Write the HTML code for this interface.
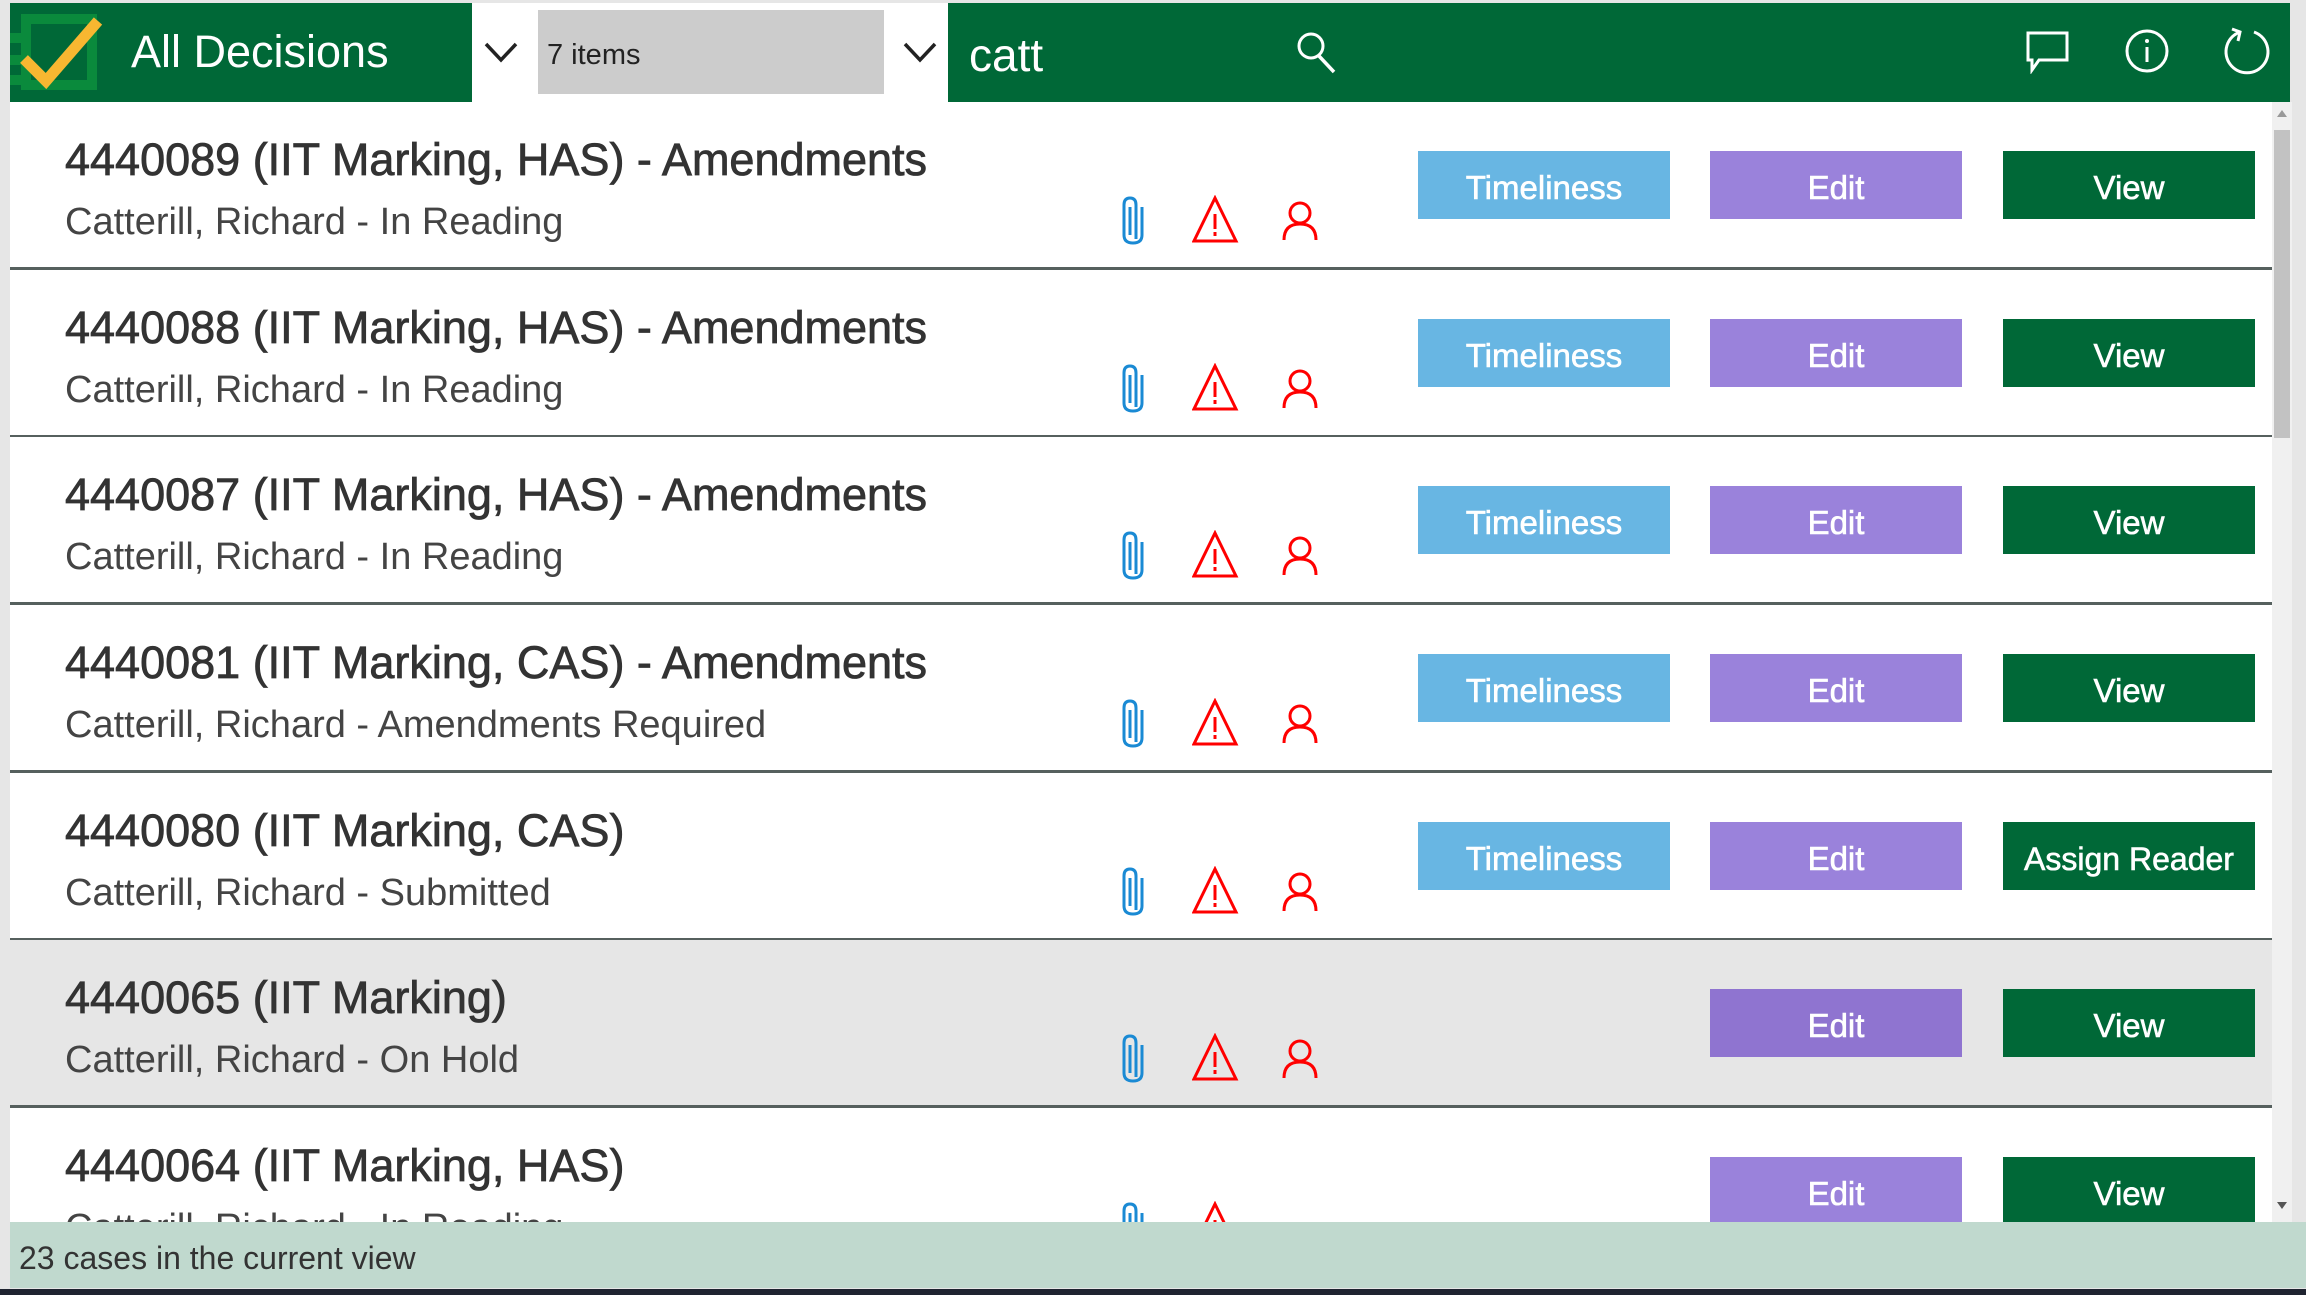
<!DOCTYPE html>
<html><head><meta charset="utf-8"><style>
*{margin:0;padding:0;box-sizing:border-box}
body{width:2306px;height:1295px;overflow:hidden;background:#e6e6e6;font-family:"Liberation Sans",sans-serif;position:relative}
.abs{position:absolute}
.row{position:absolute;left:10px;width:2262px;height:168px;background:#fff;border-bottom:3px solid #56605e;overflow:hidden}
.row.sel{background:#e6e6e6}
.t{position:absolute;left:55px;top:32px;font-size:45px;color:#333;white-space:nowrap;transform:scaleX(1.0);transform-origin:left;-webkit-text-stroke:.8px #333}
.s{position:absolute;left:55px;top:99px;font-size:38px;color:#444;white-space:nowrap;transform:scaleX(1.0);transform-origin:left}
.b{position:absolute;top:49px;width:252px;height:68px;color:#fff;font-size:33px;text-align:center;line-height:74px;-webkit-text-stroke:.6px #fff}
.tm{left:1408px;background:#68b6e3}
.ed{left:1700px;background:#9a82db}
.vw{left:1993px;background:#006837}
.ic{position:absolute;top:93px}
</style></head><body>
<svg width="0" height="0" style="position:absolute"><defs>
<g id="clip"><path d="M14 44 L14 10 Q14 3 8 3 Q2 3 2 10 L2 40 Q2 48 11 48 Q20 48 20 40 L20 12" fill="none" stroke="#1a8ad4" stroke-width="3"/><path d="M8 12 L8 40" stroke="#1a8ad4" stroke-width="3"/></g>
<g id="warn"><path d="M23 3 L44 46 L2 46 Z" fill="none" stroke="#f00" stroke-width="3"/><path d="M23 19 L23 34" stroke="#f00" stroke-width="3"/><rect x="21.5" y="37" width="3" height="4" fill="#f00"/></g>
<g id="pers"><circle cx="18" cy="13" r="10" fill="none" stroke="#f00" stroke-width="3"/><path d="M2 40 Q2 24 18 24 Q34 24 34 40" fill="none" stroke="#f00" stroke-width="3"/></g>
</defs></svg>

<div class="abs" style="left:10px;top:3px;width:2280px;height:99px;background:#006837"></div>
<div class="abs" style="left:472px;top:3px;width:476px;height:99px;background:#fff"></div>
<div class="abs" style="left:538px;top:10px;width:346px;height:84px;background:#cccccc"></div>
<div class="abs" style="left:547px;top:39px;font-size:29px;color:#222">7 items</div>
<svg class="abs" style="left:483px;top:40px" width="36" height="24"><path d="M3 4 L18 20 L33 4" fill="none" stroke="#222" stroke-width="3.5"/></svg>
<svg class="abs" style="left:902px;top:40px" width="36" height="24"><path d="M3 4 L18 20 L33 4" fill="none" stroke="#222" stroke-width="3.5"/></svg>
<svg class="abs" style="left:10px;top:3px" width="100" height="99">
<rect x="0" y="0" width="100" height="99" fill="#006837"/>
<rect x="16" y="16" width="66" height="66" fill="none" stroke="#0a8a3c" stroke-width="10"/>
<rect x="0" y="30" width="14" height="10" fill="#0a8a3c"/><rect x="0" y="52" width="14" height="10" fill="#0a8a3c"/><rect x="0" y="72" width="14" height="10" fill="#0a8a3c"/>
<path d="M14 56 L36 78 L88 18" fill="none" stroke="#f7b731" stroke-width="11"/>
</svg>
<div class="abs" style="left:131px;top:26px;font-size:45px;color:#fff">All Decisions</div>
<div class="abs" style="left:969px;top:28px;font-size:46px;color:#fff">catt</div>
<svg class="abs" style="left:1294px;top:30px" width="46" height="46"><circle cx="17" cy="16" r="12" fill="none" stroke="#fff" stroke-width="3"/><path d="M25 26 L40 42" stroke="#fff" stroke-width="3.5"/></svg>
<svg class="abs" style="left:2025px;top:30px" width="46" height="44"><path d="M3 3 L42 3 L42 30 L14 30 L7 40 L7 30 L3 30 Z" fill="none" stroke="#fff" stroke-width="3"/></svg>
<svg class="abs" style="left:2124px;top:28px" width="46" height="46"><circle cx="23" cy="23" r="20" fill="none" stroke="#fff" stroke-width="3"/><path d="M23 19 L23 34" stroke="#fff" stroke-width="3"/><circle cx="23" cy="13" r="2" fill="#fff"/></svg>
<svg class="abs" style="left:2222px;top:26px" width="50" height="52"><path d="M18 6 A21 21 0 1 0 32 6" fill="none" stroke="#fff" stroke-width="3"/><path d="M10 3 L18 6 L16 15" fill="none" stroke="#fff" stroke-width="3"/></svg>

<div class="row" style="top:102px"><div class="t">4440089 (IIT Marking, HAS) - Amendments</div><div class="s">Catterill, Richard - In Reading</div>
<svg class="ic" style="left:1112px" width="24" height="52"><use href="#clip"/></svg><svg class="ic" style="left:1182px" width="48" height="52"><use href="#warn"/></svg><svg class="ic" style="left:1272px;top:98px" width="38" height="44"><use href="#pers"/></svg>
<div class="b tm">Timeliness</div><div class="b ed">Edit</div><div class="b vw">View</div></div>

<div class="row" style="top:270px"><div class="t">4440088 (IIT Marking, HAS) - Amendments</div><div class="s">Catterill, Richard - In Reading</div>
<svg class="ic" style="left:1112px" width="24" height="52"><use href="#clip"/></svg><svg class="ic" style="left:1182px" width="48" height="52"><use href="#warn"/></svg><svg class="ic" style="left:1272px;top:98px" width="38" height="44"><use href="#pers"/></svg>
<div class="b tm">Timeliness</div><div class="b ed">Edit</div><div class="b vw">View</div></div>

<div class="row" style="top:437px"><div class="t">4440087 (IIT Marking, HAS) - Amendments</div><div class="s">Catterill, Richard - In Reading</div>
<svg class="ic" style="left:1112px" width="24" height="52"><use href="#clip"/></svg><svg class="ic" style="left:1182px" width="48" height="52"><use href="#warn"/></svg><svg class="ic" style="left:1272px;top:98px" width="38" height="44"><use href="#pers"/></svg>
<div class="b tm">Timeliness</div><div class="b ed">Edit</div><div class="b vw">View</div></div>

<div class="row" style="top:605px"><div class="t">4440081 (IIT Marking, CAS) - Amendments</div><div class="s">Catterill, Richard - Amendments Required</div>
<svg class="ic" style="left:1112px" width="24" height="52"><use href="#clip"/></svg><svg class="ic" style="left:1182px" width="48" height="52"><use href="#warn"/></svg><svg class="ic" style="left:1272px;top:98px" width="38" height="44"><use href="#pers"/></svg>
<div class="b tm">Timeliness</div><div class="b ed">Edit</div><div class="b vw">View</div></div>

<div class="row" style="top:773px"><div class="t">4440080 (IIT Marking, CAS)</div><div class="s">Catterill, Richard - Submitted</div>
<svg class="ic" style="left:1112px" width="24" height="52"><use href="#clip"/></svg><svg class="ic" style="left:1182px" width="48" height="52"><use href="#warn"/></svg><svg class="ic" style="left:1272px;top:98px" width="38" height="44"><use href="#pers"/></svg>
<div class="b tm">Timeliness</div><div class="b ed">Edit</div><div class="b vw" style="font-size:32px">Assign Reader</div></div>

<div class="row sel" style="top:940px"><div class="t">4440065 (IIT Marking)</div><div class="s">Catterill, Richard - On Hold</div>
<svg class="ic" style="left:1112px" width="24" height="52"><use href="#clip"/></svg><svg class="ic" style="left:1182px" width="48" height="52"><use href="#warn"/></svg><svg class="ic" style="left:1272px;top:98px" width="38" height="44"><use href="#pers"/></svg>
<div class="b ed" style="background:#8f74d0">Edit</div><div class="b vw">View</div></div>

<div class="row" style="top:1108px;height:114px;border:none"><div class="t">4440064 (IIT Marking, HAS)</div><div class="s">Catterill, Richard - In Reading</div>
<svg class="ic" style="left:1112px" width="24" height="52"><use href="#clip"/></svg><svg class="ic" style="left:1182px" width="48" height="52"><use href="#warn"/></svg>
<div class="b ed">Edit</div><div class="b vw">View</div></div>

<div class="abs" style="left:2272px;top:102px;width:20px;height:1120px;background:#f0f0f0"></div>
<div class="abs" style="left:2274px;top:130px;width:16px;height:308px;background:#c2c2c2"></div>
<div class="abs" style="left:2277px;top:110px;width:0;height:0;border-left:5px solid transparent;border-right:5px solid transparent;border-bottom:7px solid #999"></div>
<div class="abs" style="left:2277px;top:1202px;width:0;height:0;border-left:5px solid transparent;border-right:5px solid transparent;border-top:7px solid #555"></div>

<div class="abs" style="left:10px;top:1222px;width:2296px;height:66px;background:#c0d9ce"></div>
<div class="abs" style="left:19px;top:1240px;font-size:32px;color:#333">23 cases in the current view</div>
<div class="abs" style="left:0;top:1289px;width:2306px;height:6px;background:#1f2330"></div>
</body></html>
